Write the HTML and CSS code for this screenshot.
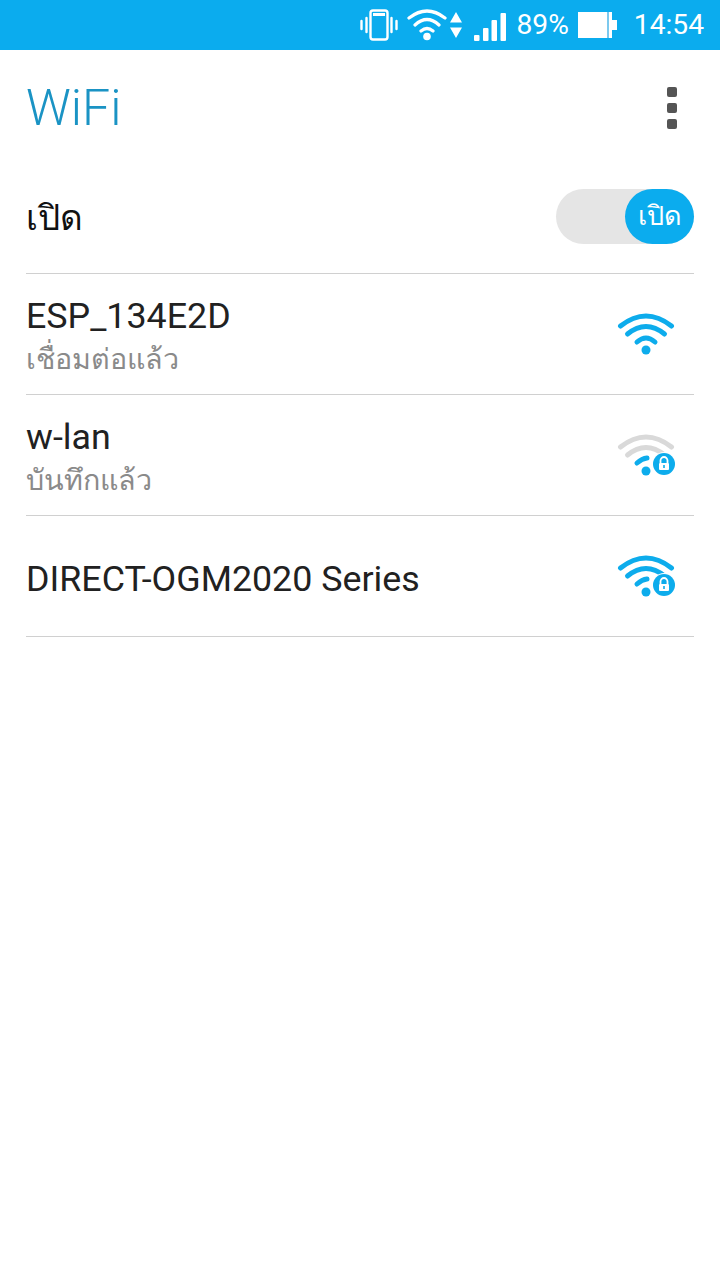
FILE: index.html
```html
<!DOCTYPE html>
<html lang="th">
<head>
  <meta charset="UTF-8" />
  <title>WiFi</title>
  <link rel="stylesheet" href="styles.css">
</head>
<body>

<div class="status-bar">
  <svg class="ic-vibrate" width="38" height="34" viewBox="0 0 38 34">
    <rect x="10.500" y="2.500" width="17" height="29" rx="2.500" fill="none" stroke="#fff" stroke-width="2.400"/>
    <rect x="13" y="5" width="12" height="3" fill="#fff"/>
    <path d="M6.500 10v14M31.500 10v14M1.500 13v8M36.500 13v8" stroke="#fff" stroke-width="2.400" stroke-linecap="round" fill="none"/>
  </svg>
  <svg class="ic-wifi-top" width="40" height="34" viewBox="0 0 40 34">
    <path d="M2 10Q20 -4 38 10M8 17Q20 6 32 17M14 23Q20 18 26 23" fill="none" stroke="#fff" stroke-width="3.200" stroke-linecap="round"/>
    <circle cx="20" cy="28.500" r="3.800" fill="#fff"/>
  </svg>
  <svg class="ic-updown" width="12" height="26" viewBox="0 0 12 26">
    <path d="M6 0l6 10.500H0zM6 26l6-10.500H0z" fill="#fff"/>
  </svg>
  <svg class="ic-signal" width="32" height="28" viewBox="0 0 32 28">
    <rect x="0" y="22" width="5.500" height="6" rx="1" fill="#fff"/>
    <rect x="9" y="15" width="5.500" height="13" rx="1" fill="#fff"/>
    <rect x="17.500" y="7" width="5.500" height="21" rx="1" fill="#fff"/>
    <rect x="26.500" y="0" width="5.500" height="28" rx="1" fill="#fff"/>
  </svg>
  <span class="status-text pct">89%</span>
  <svg class="ic-battery" width="40" height="26" viewBox="0 0 40 26">
    <rect x="0" y="0" width="34" height="26" fill="#fff"/>
    <rect x="29" y="0" width="2" height="26" fill="#7cc9ee"/>
    <rect x="34" y="8" width="5" height="10" fill="#fff"/>
  </svg>
  <span class="status-text clock">14:54</span>
</div>

<div class="title-bar">
  <h1 class="title">WiFi</h1>
  <div class="overflow">
    <span></span><span></span><span></span>
  </div>
</div>

<div class="list">
  <div class="row row-master">
    <span class="master-label">เปิด</span>
    <div class="switch"><span class="switch-knob">เปิด</span></div>
  </div>

  <div class="row">
    <div class="net-text">
      <div class="net-name">ESP_134E2D</div>
      <div class="net-sub">เชื่อมต่อแล้ว</div>
    </div>
    <svg class="net-icon" width="60" height="48" viewBox="0 0 60 48">
      <g fill="none" stroke-width="5" stroke-linecap="round" stroke="#0dacec">
        <path d="M4.500 16Q30 -4 55.500 16"/>
        <path d="M11.500 24Q30 9 48.500 24"/>
        <path d="M21 32Q30 24 39 32"/>
      </g>
      <circle cx="30" cy="40" r="4.500" fill="#0dacec"/>
    </svg>
  </div>

  <div class="row">
    <div class="net-text">
      <div class="net-name">w-lan</div>
      <div class="net-sub">บันทึกแล้ว</div>
    </div>
    <svg class="net-icon" width="60" height="48" viewBox="0 0 60 48">
      <g fill="none" stroke-width="5" stroke-linecap="round">
        <path d="M4.500 16Q30 -4 55.500 16" stroke="#d9d9d9"/>
        <path d="M11.500 24Q30 9 48.500 24" stroke="#d9d9d9"/>
        <path d="M21 32Q26 27.500 31 27" stroke="#0dacec"/>
      </g>
      <circle cx="30" cy="40" r="4.500" fill="#0dacec"/>
      <circle cx="48" cy="33" r="12" fill="#fff"/>
      <circle cx="48" cy="33" r="11" fill="#0dacec"/>
      <path d="M44.500 32v-2.500a3.500 3.500 0 0 1 7 0V32" fill="none" stroke="#fff" stroke-width="1.800"/>
      <rect x="43" y="32" width="10" height="7" rx="1" fill="#fff"/>
      <rect x="47.200" y="34" width="1.600" height="3" fill="#0dacec"/>
    </svg>
  </div>

  <div class="row">
    <div class="net-text">
      <div class="net-name">DIRECT-OGM2020 Series</div>
    </div>
    <svg class="net-icon" width="60" height="48" viewBox="0 0 60 48">
      <g fill="none" stroke-width="5" stroke-linecap="round" stroke="#0dacec">
        <path d="M4.500 16Q30 -4 55.500 16"/>
        <path d="M11.500 24Q30 9 48.500 24"/>
        <path d="M21 32Q26 27.500 31 27"/>
      </g>
      <circle cx="30" cy="40" r="4.500" fill="#0dacec"/>
      <circle cx="48" cy="33" r="12" fill="#fff"/>
      <circle cx="48" cy="33" r="11" fill="#0dacec"/>
      <path d="M44.500 32v-2.500a3.500 3.500 0 0 1 7 0V32" fill="none" stroke="#fff" stroke-width="1.800"/>
      <rect x="43" y="32" width="10" height="7" rx="1" fill="#fff"/>
      <rect x="47.200" y="34" width="1.600" height="3" fill="#0dacec"/>
    </svg>
  </div>
</div>

</body>
</html>
```

FILE: styles.css
```css
body {
  font-family: Roboto, "Noto Sans", "DejaVu Sans", sans-serif;
  background: #fff;
  color: #212121;
  margin: 0;
  height: 1280px;
  overflow: hidden;
}

.status-bar {
  height: 50px;
  background: #0bacee;
  display: flex;
  align-items: center;
  justify-content: flex-end;
  padding-right: 16px;
  color: #fff;
}

.status-text {
  font-size: 28.200px;
  line-height: 52px;
}

.ic-vibrate { margin-right: 9px; }
.ic-wifi-top { margin-right: 3px; }
.ic-updown { margin-right: 12px; }
.ic-signal { margin-right: 10px; margin-top: 4px; }
.pct { margin-right: 9px; }
.ic-battery { margin-right: 16px; }

.title-bar {
  height: 115px;
  display: flex;
  align-items: center;
  justify-content: space-between;
  padding: 0 43px 0 26px;
}

.title {
  margin: 0;
  padding-top: 1px;
  font-size: 50px;
  font-weight: 300;
  color: #1a93c4;
}

.overflow {
  display: flex;
  flex-direction: column;
  gap: 6px;
}

.overflow span {
  width: 10px;
  height: 10px;
  border-radius: 2px;
  background: #555;
}

.list {
  padding: 0 26px;
}

.row {
  height: 120px;
  border-bottom: 1px solid #d0d0d0;
  display: flex;
  align-items: center;
  justify-content: space-between;
}

.row-master {
  height: 103px;
  padding-bottom: 5px;
}

.master-label {
  padding-top: 2px;
  font-size: 35px;
  color: #111;
}

.switch {
  width: 138px;
  height: 55px;
  border-radius: 28px;
  background: #e5e5e5;
  display: flex;
  justify-content: flex-end;
}

.switch-knob {
  width: 69px;
  height: 55px;
  border-radius: 28px;
  background: #0bacee;
  color: #fff;
  font-size: 27px;
  line-height: 55px;
  text-align: center;
}

.net-text {
  padding-top: 5px;
}

.net-name {
  font-size: 35.800px;
  line-height: 44px;
}

.net-sub {
  font-size: 28.700px;
  line-height: 42px;
  color: #8a8a8a;
}

.net-icon {
  margin-right: 18px;
}
```
